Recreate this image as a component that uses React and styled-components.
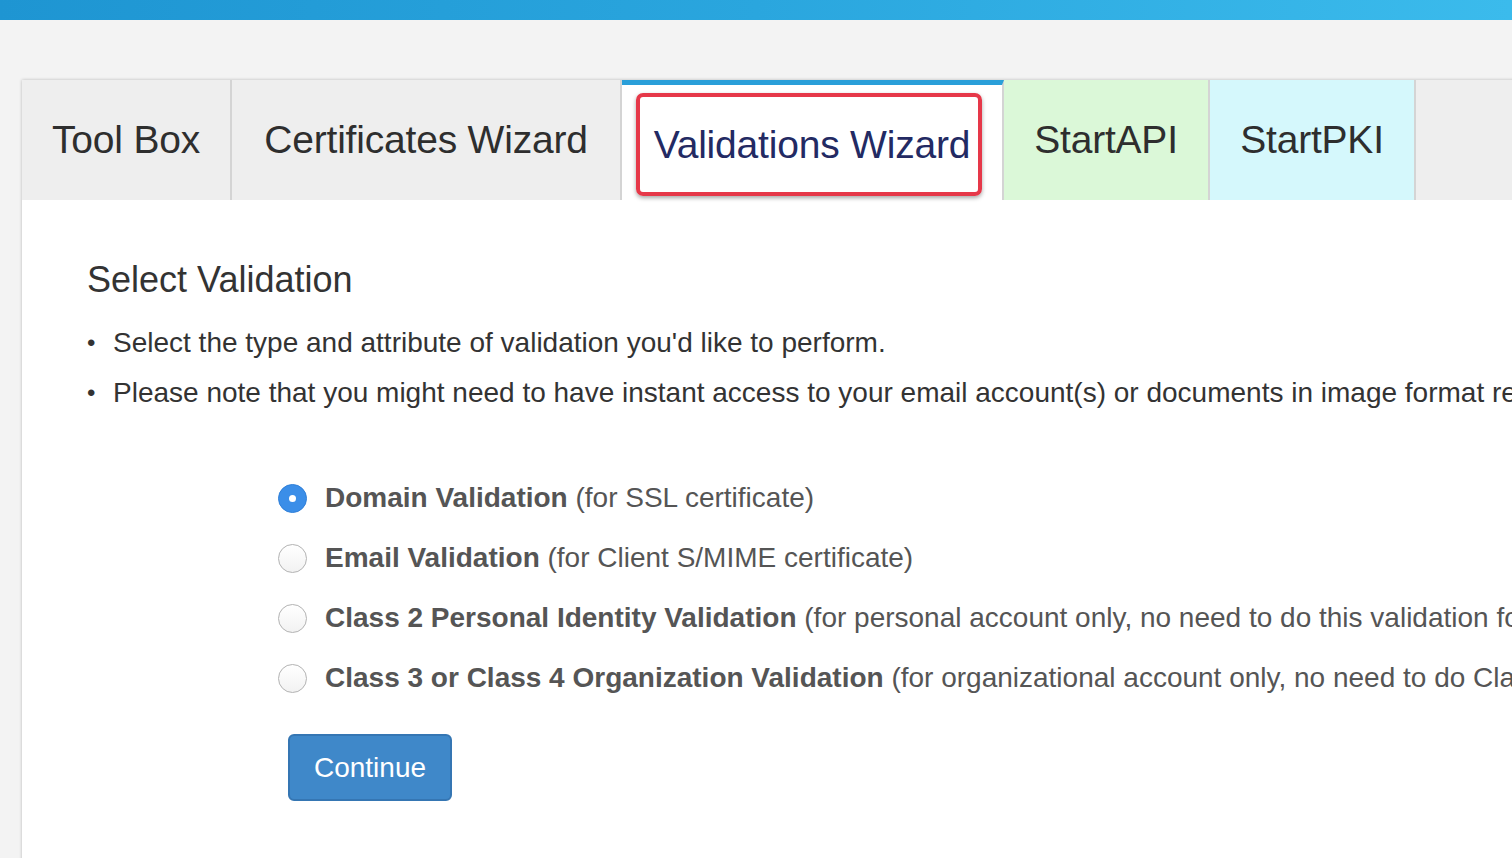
import styled, { createGlobalStyle } from "styled-components";

const GlobalStyle = createGlobalStyle`
  html, body {
    margin: 0;
    padding: 0;
    background: #f3f3f3;
    overflow: hidden;
  }
  body {
    font-family: "Liberation Sans", Arial, Helvetica, sans-serif;
  }
  * {
    box-sizing: border-box;
  }
`;

const tabs = [
  { label: "Tool Box", w: 210, bg: "#eeeeee" },
  { label: "Certificates Wizard", w: 390, bg: "#eeeeee" },
  { label: "Validations Wizard", w: 382, bg: "#ffffff", active: true },
  { label: "StartAPI", w: 206, bg: "#dbf8d8" },
  { label: "StartPKI", w: 206, bg: "#d5f8fc" },
];

const options = [
  { bold: "Domain Validation", rest: "(for SSL certificate)", checked: true },
  { bold: "Email Validation", rest: "(for Client S/MIME certificate)" },
  {
    bold: "Class 2 Personal Identity Validation",
    rest: "(for personal account only, no need to do this validation for organizational account)",
  },
  {
    bold: "Class 3 or Class 4 Organization Validation",
    rest: "(for organizational account only, no need to do Class 2 Personal Identity Validation)",
  },
];

const App = () => {
  return (
    <>
      <GlobalStyle />
      <TopBar />
      <Main>
        <Panel>
          <TabBar>
            {tabs.map((t) => (
              <Tab key={t.label} $w={t.w} $bg={t.bg} $active={t.active}>
                {t.label}
                {t.active && <Highlight />}
              </Tab>
            ))}
          </TabBar>

          <Content>
            <Heading>Select Validation</Heading>
            <Notes>
              <Note>
                <Dot>•</Dot>
                Select the type and attribute of validation you'd like to perform.
              </Note>
              <Note>
                <Dot>•</Dot>
                Please note that you might need to have instant access to your email
                account(s) or documents in image format ready for upload.
              </Note>
            </Notes>

            <RadioGroup>
              {options.map((o) => (
                <RadioRow key={o.bold}>
                  <Radio $checked={o.checked} />
                  <Label>
                    <b>{o.bold}</b> {o.rest}
                  </Label>
                </RadioRow>
              ))}
              <ContinueBtn>Continue</ContinueBtn>
            </RadioGroup>
          </Content>
        </Panel>
      </Main>
    </>
  );
};

export default App;

const TopBar = styled.div`
  height: 20px;
  background: linear-gradient(90deg, #1e95d2 0%, #2aa6de 50%, #3bbbec 100%);
`;

const Main = styled.div`
  padding: 60px 0 0 22px;
`;

const Panel = styled.div`
  width: 1600px;
  min-height: 800px;
  background: #ffffff;
  box-shadow: 0 0 3px rgba(0, 0, 0, 0.25);
`;

const TabBar = styled.div`
  display: flex;
  height: 120px;
  background: #eeeeee;
`;

const Tab = styled.div`
  position: relative;
  width: ${(p) => p.$w}px;
  height: 120px;
  display: flex;
  align-items: center;
  justify-content: center;
  background: ${(p) => p.$bg};
  border-right: 2px solid #d4d4d4;
  border-top: ${(p) => (p.$active ? "5px solid #2a9fd9" : "none")};
  padding-top: ${(p) => (p.$active ? "5px" : "0")};
  color: ${(p) => (p.$active ? "#232a63" : "#2e2e2e")};
  font-size: 39px;
  white-space: nowrap;
  letter-spacing: -0.2px;
`;

const Highlight = styled.div`
  position: absolute;
  left: 14px;
  top: 8px;
  width: 346px;
  height: 103px;
  border: 4px solid #e63849;
  border-radius: 7px;
  box-shadow: 0 2px 4px rgba(0, 0, 0, 0.35);
  pointer-events: none;
`;

const Content = styled.div`
  padding: 58px 0 0 65px;
  white-space: nowrap;
`;

const Heading = styled.h2`
  margin: 0;
  font-size: 36px;
  font-weight: 400;
  color: #333333;
  line-height: 44px;
`;

const Notes = styled.ul`
  list-style: none;
  margin: 16px 0 0 0;
  padding: 0;
`;

const Note = styled.li`
  display: flex;
  align-items: center;
  font-size: 28px;
  color: #333333;
  line-height: 50px;
`;

const Dot = styled.span`
  width: 26px;
  flex-shrink: 0;
  font-size: 24px;
`;

const RadioGroup = styled.div`
  display: flex;
  flex-direction: column;
  align-items: flex-start;
  padding: 50px 0 0 191px;
`;

const RadioRow = styled.div`
  display: flex;
  align-items: center;
  height: 60px;
`;

const Radio = styled.span`
  width: 29px;
  height: 29px;
  border-radius: 50%;
  margin-right: 18px;
  flex-shrink: 0;
  display: flex;
  align-items: center;
  justify-content: center;
  background: ${(p) =>
    p.$checked ? "#3b8ee8" : "linear-gradient(#ffffff, #f2f2f2)"};
  border: ${(p) => (p.$checked ? "1px solid #2f7fd8" : "1px solid #b3b3b3")};

  &::after {
    content: "";
    display: ${(p) => (p.$checked ? "block" : "none")};
    width: 7px;
    height: 7px;
    border-radius: 50%;
    background: #ffffff;
  }
`;

const Label = styled.span`
  font-size: 28px;
  color: #555555;

  b {
    font-weight: 700;
  }
`;

const ContinueBtn = styled.button`
  margin: 26px 0 0 10px;
  width: 164px;
  height: 67px;
  background: #3f88c9;
  border: 2px solid #3576b3;
  border-radius: 6px;
  color: #ffffff;
  font-family: "Liberation Sans", Arial, sans-serif;
  font-size: 28px;
  cursor: pointer;
`;
